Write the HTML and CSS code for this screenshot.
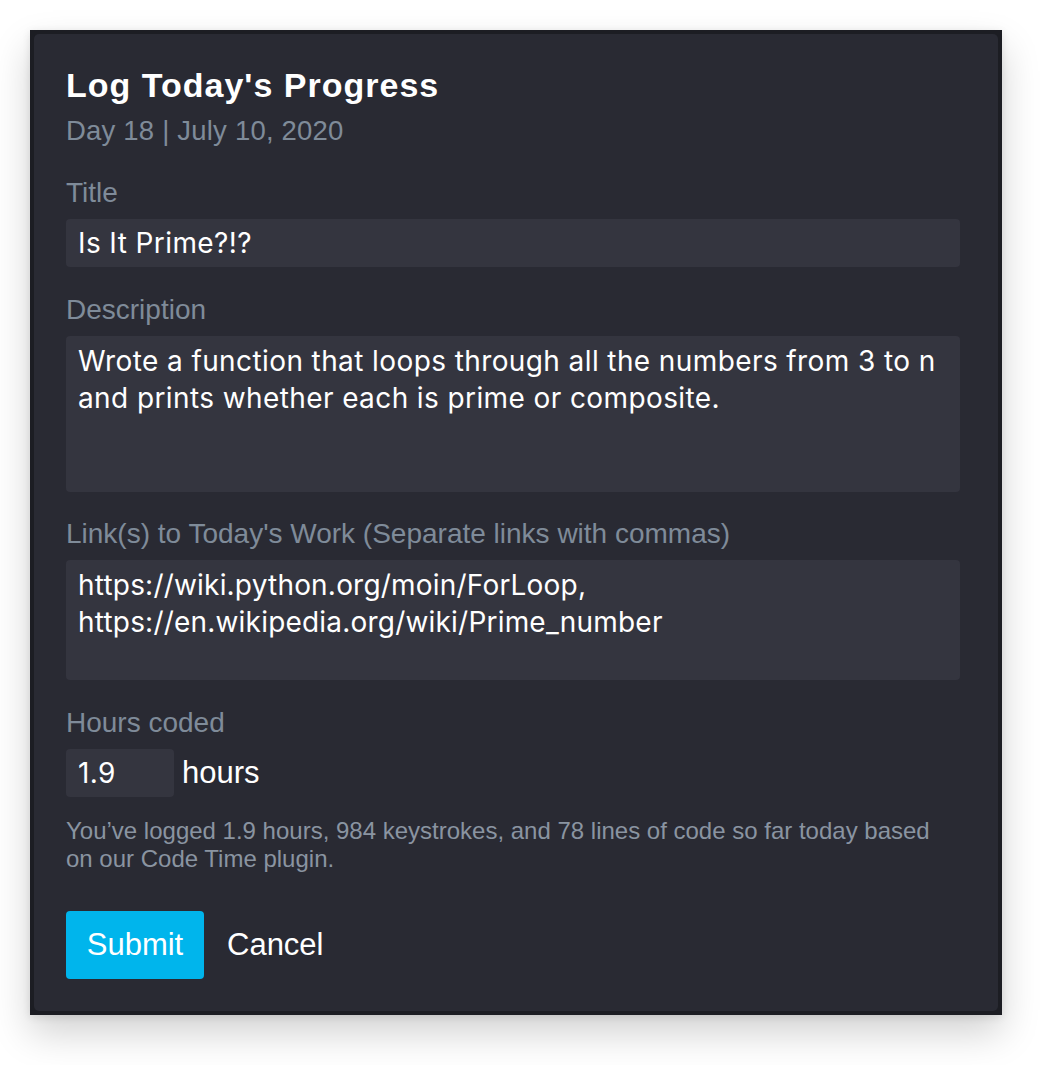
FILE: index.html
```html
<!DOCTYPE html>
<html lang="en">
<head>
<meta charset="utf-8">
<title>Log Today's Progress</title>
<link rel="stylesheet" href="styles.css">
</head>
<body>
  <div class="frame">
    <form class="panel">
      <h1 class="heading">Log Today's Progress</h1>
      <p class="subtitle">Day 18 | July 10, 2020</p>

      <div class="field">
        <label class="label">Title</label>
        <div class="box box-line">Is It Prime?!?</div>
      </div>

      <div class="field">
        <label class="label">Description</label>
        <div class="box box-area box-desc">Wrote a function that loops through all the numbers from 3 to n and prints whether each is prime or composite.</div>
      </div>

      <div class="field">
        <label class="label">Link(s) to Today's Work (Separate links with commas)</label>
        <div class="box box-area box-links">https://wiki.python.org/moin/ForLoop,<br>https://en.wikipedia.org/wiki/Prime_number</div>
      </div>

      <div class="field field-hours">
        <label class="label">Hours coded</label>
        <div class="hours-row">
          <div class="box box-line box-hours">1.9</div>
          <span class="unit">hours</span>
        </div>
      </div>

      <p class="help">You’ve logged 1.9 hours, 984 keystrokes, and 78 lines of code so far today based on our Code Time plugin.</p>

      <div class="actions">
        <button type="button" class="btn-submit">Submit</button>
        <button type="button" class="btn-cancel">Cancel</button>
      </div>
    </form>
  </div>
</body>
</html>
```

FILE: styles.css
```css
* { box-sizing: border-box; }

html, body {
  margin: 0;
  padding: 0;
  background: #ffffff;
}

body {
  padding: 30px 30px 50px;
  font-family: "Liberation Sans", Arial, sans-serif;
}

.frame {
  width: 972px;
  height: 985px;
  background: #1c1d23;
  padding: 4px;
  box-shadow: 0 18px 36px rgba(0, 0, 0, 0.18), 0 2px 8px rgba(0, 0, 0, 0.10);
}

.panel {
  height: 100%;
  background: #292a33;
  border-radius: 5px;
  padding: 31px 38px 32px 32px;
  display: flex;
  flex-direction: column;
}

.heading {
  margin: 0;
  font-size: 34px;
  line-height: 40px;
  font-weight: 700;
  color: #ffffff;
  letter-spacing: 1px;
}

.subtitle {
  margin: 10px 0 0;
  font-size: 27.5px;
  line-height: 32px;
  color: #7f8b99;
  letter-spacing: 0.2px;
}

.field {
  display: flex;
  flex-direction: column;
}

.field:first-of-type { margin-top: 30px; }

.field + .field { margin-top: 26.5px; }

.label {
  font-size: 28px;
  line-height: 32px;
  color: #7f8b99;
  margin-bottom: 10px;
}

.box {
  background: #34353f;
  border-radius: 4px;
  color: #ffffff;
  font-family: Inter, "Noto Sans", sans-serif;
  font-size: 28px;
  letter-spacing: 0.4px;
  padding: 0 12px;
}

.box-line {
  height: 48px;
  line-height: 48px;
}

.box-area {
  line-height: 37px;
  padding-top: 7px;
}

.box-desc { height: 156px; }
.box-links { height: 120px; letter-spacing: 0.2px; }

.hours-row {
  display: flex;
  align-items: center;
  gap: 8px;
}

.box-hours {
  width: 108px;
}

.unit {
  font-size: 31px;
  color: #ffffff;
}

.help {
  margin: 20px 0 0;
  font-size: 24px;
  line-height: 28px;
  color: #8a94a1;
}

.actions {
  margin-top: 38px;
  display: flex;
  align-items: center;
  gap: 23px;
}

.btn-submit {
  height: 68px;
  width: 138px;
  border: 0;
  border-radius: 4px;
  background: #00b5ec;
  color: #ffffff;
  font-family: "Liberation Sans", Arial, sans-serif;
  font-size: 31px;
  padding: 0;
}

.btn-cancel {
  border: 0;
  background: none;
  color: #ffffff;
  font-family: "Liberation Sans", Arial, sans-serif;
  font-size: 31px;
  padding: 0;
}
```
